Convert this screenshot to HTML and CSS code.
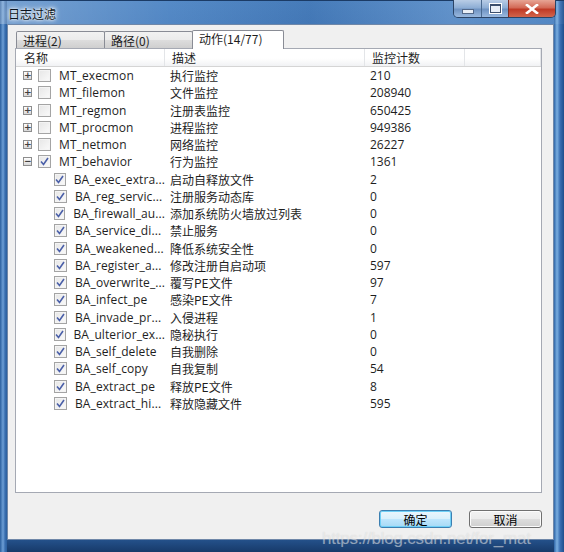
FILE: index.html
```html
<!DOCTYPE html>
<html>
<head>
  <meta charset="UTF-8">
  <title>日志过滤</title>
  <link rel="stylesheet" href="styles.css">
</head>
<body>
  <div class="window">
    <!-- Title bar -->
    <div class="titlebar">
      <span class="title">日志过滤</span>
      <div class="caption-buttons">
        <div class="cap-btn cap-min"><span class="min-bar"></span></div>
        <div class="cap-btn cap-max"><span class="max-box"></span></div>
        <div class="cap-btn cap-close">
          <svg width="14" height="10" viewBox="0 0 14 10"><path d="M2 1 L12 9 M12 1 L2 9" stroke="#fff" stroke-width="2.6" stroke-linecap="square"/></svg>
        </div>
      </div>
    </div>

    <!-- Client area -->
    <div class="client">
      <div class="tabs">
        <div class="tab">进程(2)</div>
        <div class="tab">路径(0)</div>
        <div class="tab active">动作(14/77)</div>
      </div>

      <div class="listbox">
        <div class="row header">
          <div class="cell">名称</div>
          <div class="cell">描述</div>
          <div class="cell">监控计数</div>
          <div class="cell"></div>
        </div>
        <div id="rows"></div>
      </div>

      <div class="buttons">
        <button class="btn default">确定</button>
        <button class="btn">取消</button>
      </div>
    </div>
    <div class="watermark">https://blog.csdn.net/for_mat</div>
  </div>

  <script>
    // Tree rows: [name, description, count, level, expanded, checked]
    const rows = [
      ['MT_execmon', '执行监控', '210', 0, false, false],
      ['MT_filemon', '文件监控', '208940', 0, false, false],
      ['MT_regmon', '注册表监控', '650425', 0, false, false],
      ['MT_procmon', '进程监控', '949386', 0, false, false],
      ['MT_netmon', '网络监控', '26227', 0, false, false],
      ['MT_behavior', '行为监控', '1361', 0, true, true],
      ['BA_exec_extra...', '启动自释放文件', '2', 1],
      ['BA_reg_servic...', '注册服务动态库', '0', 1],
      ['BA_firewall_au...', '添加系统防火墙放过列表', '0', 1],
      ['BA_service_di...', '禁止服务', '0', 1],
      ['BA_weakened...', '降低系统安全性', '0', 1],
      ['BA_register_a...', '修改注册自启动项', '597', 1],
      ['BA_overwrite_...', '覆写PE文件', '97', 1],
      ['BA_infect_pe', '感染PE文件', '7', 1],
      ['BA_invade_pr...', '入侵进程', '1', 1],
      ['BA_ulterior_ex...', '隐秘执行', '0', 1],
      ['BA_self_delete', '自我删除', '0', 1],
      ['BA_self_copy', '自我复制', '54', 1],
      ['BA_extract_pe', '释放PE文件', '8', 1],
      ['BA_extract_hi...', '释放隐藏文件', '595', 1]
    ];

    const check = '<svg width="9" height="9" viewBox="0 0 9 9"><path d="M1 4.5 L3.5 7.5 L8 1" fill="none" stroke="#4a5fa8" stroke-width="1.6"/></svg>';

    const container = document.getElementById('rows');
    rows.forEach(r => {
      const [name, desc, count, level, expanded] = r;
      const checked = level === 1 || r[5];
      let nameHtml = '';
      if (level === 0) {
        nameHtml += '<span class="expander">' + (expanded ? '&minus;' : '+') + '</span>';
      }
      nameHtml += '<span class="checkbox">' + (checked ? check : '') + '</span>';
      nameHtml += '<span class="name">' + name + '</span>';
      const row = document.createElement('div');
      row.className = 'row level' + level;
      row.innerHTML =
        '<div class="cell namecell">' + nameHtml + '</div>' +
        '<div class="cell">' + desc + '</div>' +
        '<div class="cell">' + count + '</div>' +
        '<div class="cell"></div>';
      container.appendChild(row);
    });
  </script>
</body>
</html>
```

FILE: styles.css
```css
/* Page is the whole dialog window */
body {
  margin: 0;
  background: #1d4f8a;
  font-family: "Open Sans", "Noto Sans CJK SC", sans-serif;
  font-size: 12px;
  color: #1e1e1e;
}
.window {
  width: 564px;
  height: 552px;
  box-sizing: border-box;
  position: relative;
  display: flex;
  flex-direction: column;
  padding: 0 10px 12px 7px;
  background:
    linear-gradient(90deg, #2a5f9e 0px, #6d9fd6 3px, #3a6fb0 5px, #2a5f9e 7px, transparent 7px),
    linear-gradient(270deg, #1e4f8c 0px, #3b70b4 4px, #7aaee0 7px, #2f66a8 10px, transparent 10px),
    linear-gradient(180deg, #4c84c4 0px, #3a6fb0 20%, #2f64a5 96%, #173a6a 100%);
  border-top: 1px solid #1b3b66;
}
/* Title bar */
.titlebar {
  height: 23px;
  display: flex;
  align-items: flex-start;
  justify-content: space-between;
  background: linear-gradient(90deg, rgba(255,255,255,0.25), rgba(255,255,255,0.05) 30%, rgba(0,20,60,0.08) 55%, rgba(255,255,255,0.12) 80%, rgba(255,255,255,0.05));
  margin: 0 -10px 0 -7px;
  padding: 0 10px 0 7px;
}
.title {
  margin-top: 4px;
  margin-left: 1px;
  font-family: "Noto Sans CJK SC", sans-serif;
  font-size: 12px;
  color: #0c1420;
  text-shadow: 0 0 6px #ffffff, 0 0 4px #ffffff, 0 0 2px #ffffff;
}
.caption-buttons {
  display: flex;
  margin-top: -1px;
  margin-right: -2px;
  border: 1px solid #2b4466;
  border-top: none;
  border-radius: 0 0 5px 5px;
  overflow: hidden;
  height: 17px;
}
.cap-btn {
  height: 17px;
  display: flex;
  align-items: center;
  justify-content: center;
  border-left: 1px solid #4a6a90;
}
.cap-min, .cap-max {
  width: 26px;
  background: linear-gradient(180deg, #b9cde6 0%, #8eaed5 45%, #6f93c2 55%, #9ab9df 100%);
}
.cap-min { border-left: none; width: 27px; }
.min-bar {
  width: 10px;
  height: 3px;
  margin-top: 5px;
  background: #e8eef6;
  border: 1px solid #53698a;
}
.max-box {
  width: 9px;
  height: 6px;
  border: 1px solid #3c4f6c;
  border-top-width: 2px;
  background: #e8eef6;
  box-shadow: 0 0 0 1px #fff;
}
.cap-close {
  width: 46px;
  background: linear-gradient(180deg, #e7a595 0%, #d36a57 45%, #c03a26 55%, #d2654c 100%);
  border-left: 1px solid #7e2a20;
}
/* Client area */
.client {
  flex: 1;
  background: #f0f0f0;
  border: 1px solid #6f87a8;
  display: flex;
  flex-direction: column;
  padding: 5px 11px 11px 7px;
}
.tabs {
  display: flex;
  align-items: flex-end;
  height: 18px;
  padding-left: 1px;
  font-family: "Noto Sans CJK SC", sans-serif;
}
.tab {
  height: 17px;
  line-height: 17px;
  padding-left: 6px;
  box-sizing: border-box;
  width: 89px;
  border: 1px solid #898c95;
  border-bottom: none;
  border-radius: 2px 2px 0 0;
  margin-right: -1px;
  background: linear-gradient(180deg, #f2f2f2 0%, #ebebeb 50%, #dddddd 51%, #cfcfcf 100%);
  font-size: 12px;
}
.tab.active {
  height: 19px;
  width: 92px;
  padding-left: 6px;
  line-height: 16px;
  background: #ffffff;
  position: relative;
  margin-bottom: -1px;
  z-index: 1;
}
/* List view with tree */
.listbox {
  flex: 1;
  background: #ffffff;
  border: 1px solid #a5a9b3;
  box-shadow: inset 0 0 0 1px #ffffff;
}
.row {
  display: grid;
  grid-template-columns: 149px 200px 100px 1fr;
  height: 17.25px;
  align-items: center;
  white-space: nowrap;
}
.row.header {
  height: 17px;
  background: linear-gradient(180deg, #ffffff 0%, #ffffff 55%, #f1f2f4 100%);
  border-bottom: 1px solid #d5d5d5;
  font-family: "Noto Sans CJK SC", sans-serif;
}
.row.header .cell {
  padding-left: 7px;
  border-right: 1px solid #e3e5e8;
  height: 17px;
  line-height: 17px;
}
.row.header .cell:first-child {
  padding-left: 8px;
}
.row .cell {
  padding-left: 5px;
  overflow: hidden;
}
.row .cell:nth-child(2) {
  font-family: "Noto Sans CJK SC", sans-serif;
}
.row .namecell {
  display: flex;
  align-items: center;
  padding-left: 7px;
}
.row.level1 .namecell {
  padding-left: 38px;
}
.expander {
  width: 7px;
  height: 7px;
  border: 1px solid #8d8d8d;
  background: linear-gradient(180deg, #ffffff, #d8d8d8);
  font-size: 9px;
  line-height: 6px;
  text-align: center;
  font-weight: bold;
  color: #404040;
  margin-right: 6px;
  font-family: "DejaVu Sans", sans-serif;
}
.checkbox {
  width: 11px;
  height: 11px;
  border: 1px solid #a4a4a4;
  background: linear-gradient(135deg, #e6e6e6, #fafafa);
  box-shadow: inset 0 0 0 1px #f4f4f4;
  display: flex;
  align-items: center;
  justify-content: center;
  margin-right: 8px;
}
.name {
  letter-spacing: 0.1px;
}
/* Dialog buttons */
.buttons {
  display: flex;
  justify-content: flex-end;
  gap: 17px;
  padding-top: 17px;
}
.btn {
  width: 73px;
  height: 18px;
  padding: 0;
  font-family: "Noto Sans CJK SC", sans-serif;
  font-size: 12px;
  color: #000;
  border: 1px solid #707070;
  border-radius: 3px;
  background: linear-gradient(180deg, #f2f2f2 0%, #ebebeb 50%, #dddddd 51%, #cfcfcf 100%);
  box-shadow: inset 0 0 0 1px #fcfcfc;
}
.btn.default {
  border-color: #3c7fb1;
  background: linear-gradient(180deg, #eaf6fd 0%, #d9f0fc 50%, #bee6fd 51%, #a7d9f5 100%);
  box-shadow: inset 0 0 0 1px #6fd0f7;
}
/* Faint image watermark over the bottom-right corner */
.watermark {
  position: absolute;
  left: 322px;
  top: 528px;
  font-family: "Liberation Sans", sans-serif;
  font-size: 17px;
  color: rgba(255, 255, 255, 0.45);
  text-shadow: 0 0 1px rgba(140, 140, 140, 0.3);
  white-space: nowrap;
  letter-spacing: -0.2px;
}
```
